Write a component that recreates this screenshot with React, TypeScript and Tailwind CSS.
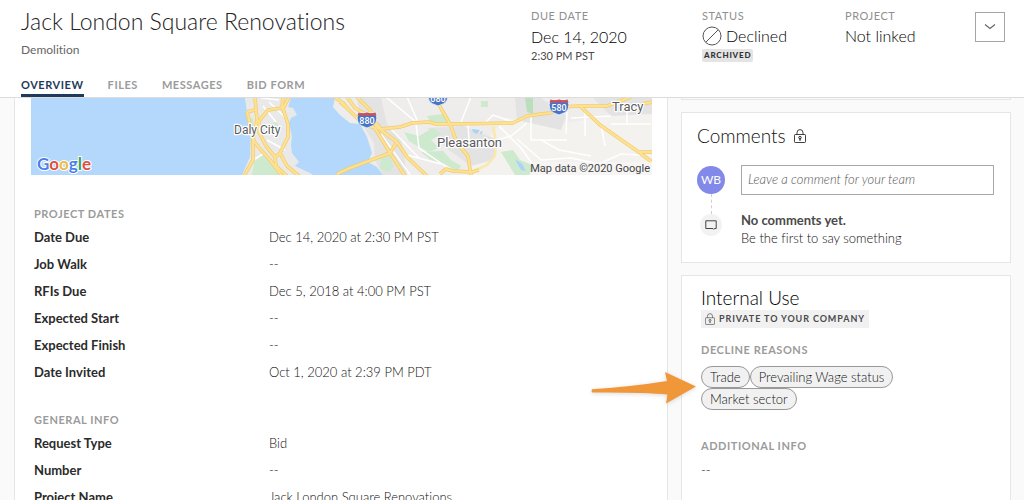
import type { ReactNode } from "react";

const tabs = ["OVERVIEW", "FILES", "MESSAGES", "BID FORM"];

const projectDates: [string, string][] = [
  ["Date Due", "Dec 14, 2020 at 2:30 PM PST"],
  ["Job Walk", "--"],
  ["RFIs Due", "Dec 5, 2018 at 4:00 PM PST"],
  ["Expected Start", "--"],
  ["Expected Finish", "--"],
  ["Date Invited", "Oct 1, 2020 at 2:39 PM PDT"],
];

const generalInfo: [string, string][] = [
  ["Request Type", "Bid"],
  ["Number", "--"],
  ["Project Name", "Jack London Square Renovations"],
];

const declineReasons = ["Trade", "Prevailing Wage status", "Market sector"];

function LockIcon({ className }: { className: string }) {
  return (
    <svg viewBox="0 0 12 14" fill="none" stroke="currentColor" strokeWidth="0.8" className={className} aria-hidden="true">
      <rect x="0.5" y="5.500" width="11" height="8" rx="0.8" />
      <path d="M3 5.500V3.600a3 3 0 0 1 6 0V5.500" />
      <circle cx="6" cy="8.600" r="1.200" strokeWidth="0.9" />
      <path d="M6 9.800v2" strokeWidth="1.200" />
    </svg>
  );
}

function Shield({ x, y, label }: { x: number; y: number; label: string }) {
  return (
    <g transform={`translate(${x} ${y})`}>
      <path
        d="M-8.5 -7.5Q-4.5 -6 0 -7.5Q4.500 -6 8.500 -7.5Q11 -2 9 2.500Q7 6 0 8Q-7 6 -9 2.500Q-11 -2 -8.5 -7.500Z"
        fill="#4775c4"
        stroke="#fff"
        strokeWidth="0.8"
      />
      <path d="M-8.500 -7.500Q-4.500 -6 0 -7.500Q4.500 -6 8.500 -7.500L9.400 -4.500H-9.400Z" fill="#d1515a" />
      <text y="4" textAnchor="middle" fill="#fff" fontSize="9" fontWeight="500">
        {label}
      </text>
    </g>
  );
}

const highways = [
  "M224 0L226 22L222 42L222 62L213 78",
  "M216 14L224 12M216 14L221 34L223 44",
  "M252 -1L251 10L237 12L228 23L228 34L235 48L244 59L250 55M244 59L245 68L256 78",
  "M258 -1L252 11L257 26L257 39L249 55L256 68L268 78",
  "M222 42L230 52L239 62L251 78",
  "M306 76L319 70L359 55L366 44",
  "M309 4L319 13L332 26L344 30L359 55L374 78",
  "M316 -1L324 10L336 17L347 30L366 44L376 59L396 78",
  "M302 -2L312 5L318 12",
  "M326 -1L340 13L344 24L350 31L369 29L381 25L398 24L405 26L419 26L482 25L496 18L510 16L519 15L530 9L549 8L576 8L592 2L600 -1",
  "M407 5L419 26L426 45L437 58L440 78",
  "M409 76L415 71L422 73L441 74L448 72",
  "M549 8L569 27L609 55L621 64M609 54H622",
  "M611 6L622 4",
];

const minorRoads = [
  "M355 -1L385 24M376 -1L387 24M440 -1L430 24M419 26L455 24L462 17L485 25",
  "M437 26L438 42L452 46L480 38L496 25M500 19V42M536 13L535 36M554 14V38M500 42H536",
  "M486 41L510 62L540 60L568 66L590 56L609 57M510 42L528 52L560 58",
  "M580 26H620M596 12V26M570 26L574 48M385 26L388 50L420 72M360 31L388 60",
  "M350 36L380 78M468 28L490 50L510 78M372 56L410 66M540 20L580 18",
  "M232 8L245 24M238 4L255 20M230 0L248 2M236 42L254 52M222 62L232 56",
];

function RegionMap() {
  return (
    <svg
      viewBox="0 0 621 77"
      preserveAspectRatio="xMidYMid slice"
      className="block h-[77px] w-full font-[Roboto,sans-serif]"
      role="img"
      aria-label="Project location"
    >
      <rect width="621" height="77" fill="#b3d8fb" />
      <path
        d="M214 0L216 15L220 29L219 59L211 77H282L279 75L264 68L268 64L261 55L260 47L261 39L258 25L260 20L266 17L262 10L257 9L260 0Z"
        fill="#e9e9ea"
      />
      <path
        d="M304 0L302 9L309 17L319 25L329 26L336 39L341 55L337 64L346 69L352 77H621V0Z"
        fill="#eeedeb"
      />
      <path d="M440 60L475 20L520 28L621 10V77H440Z" fill="#f3f2ef" />
      <g fill="#e3e3e4">
        <path d="M326 0H350L356 26L370 40L376 77H352L344 62L343 45L330 24Z" />
        <path d="M396 30L432 28L468 42L462 62L440 68L418 52Z" />
        <path d="M484 0H510L535 18L530 32L486 22Z" />
        <path d="M562 0H621V16L580 18Z" />
      </g>
      <g fill="#cde9ce">
        <path d="M223 64L232 57L244 68L249 77H221Z" />
        <path d="M217 21L222 20L223 29L219 30Z" />
        <path d="M239 26L245 24L248 29L241 31Z" />
        <path d="M373 34L388 38L402 30L410 36L400 42L408 50L398 54L388 49L378 43Z" />
        <path d="M390 54L412 53L420 62L430 68L426 73L414 66L400 62Z" />
        <path d="M350 60L358 58L363 68L358 74L349 71Z" />
        <path d="M396 18L412 16L417 24L400 24Z" />
        <path d="M470 54L482 52L489 62L503 68L498 77H484Z" />
        <path d="M450 3H457V9H450Z" />
      </g>
      <path d="M494 0H502V16L496 14Z" fill="#b9dfbd" />
      <g fill="#a9d3fa">
        <path d="M441 31L449 32L446 36L442 34ZM449 34L452 33L450 37Z" />
        <path d="M484 61L491 66L495 73L490 72Z" />
      </g>
      <g fill="none" stroke="#fff" strokeWidth="1.500">
        {minorRoads.map((d) => (
          <path key={d} d={d} />
        ))}
      </g>
      <path d="M441 74L456 67L464 58L465 44L462 28" fill="none" stroke="#fbe8ab" strokeWidth="2.500" />
      <g fill="none" strokeLinejoin="round">
        {highways.map((d) => (
          <path key={d} d={d} stroke="#f3cb69" strokeWidth="3.600" />
        ))}
        {highways.map((d) => (
          <path key={d} d={d} stroke="#fde293" strokeWidth="2.200" />
        ))}
      </g>
      <Shield x={336} y={22} label="880" />
      <Shield x={407} y={0} label="680" />
      <Shield x={528} y={9} label="580" />
      <g fill="#5c5c5f" stroke="#fff" strokeWidth="2.500" paintOrder="stroke" strokeLinejoin="round">
        <text x="203" y="36" fontSize="12">Daly City</text>
        <text x="406" y="49" fontSize="13">Pleasanton</text>
        <text x="581" y="13" fontSize="13">Tracy</text>
      </g>
      <rect x="500" y="64" width="121" height="13" fill="#f7f6f4" opacity="0.75" />
      <text x="619" y="74" textAnchor="end" fontSize="11" fill="#444">
        Map data ©2020 Google
      </text>
      <text
        x="6"
        y="72"
        fontSize="17"
        fontWeight="700"
        stroke="#fff"
        strokeWidth="2"
        paintOrder="stroke"
        className="font-[Lato,sans-serif]"
      >
        <tspan fill="#4a80ea">G</tspan>
        <tspan fill="#de4f43">o</tspan>
        <tspan fill="#eebc3f">o</tspan>
        <tspan fill="#4a80ea">g</tspan>
        <tspan fill="#3aa25c">l</tspan>
        <tspan fill="#de4f43">e</tspan>
      </text>
    </svg>
  );
}

function DetailSection({ title, rows }: { title: string; rows: [string, string][] }) {
  return (
    <section>
      <h2 className="text-[11px] leading-5 font-bold tracking-wider text-[#9b9b9b]">{title}</h2>
      <dl>
        {rows.map(([name, value]) => (
          <div key={name} className="grid grid-cols-[235px_1fr] text-[13px] leading-[27px]">
            <dt className="font-bold text-[#2b2b2b]">{name}</dt>
            <dd className="font-light text-[#111]">{value}</dd>
          </div>
        ))}
      </dl>
    </section>
  );
}

function HeaderField({ label, className, children }: { label: string; className: string; children: ReactNode }) {
  return (
    <div className={className}>
      <div className="text-[11px] leading-4 tracking-wider text-[#8f8f8f]">{label}</div>
      {children}
    </div>
  );
}

export default function App() {
  return (
    <div className="flex h-screen flex-col overflow-hidden bg-[#fafafa] font-[Lato,sans-serif] text-[#4a4a4a] [font-variant-ligatures:none]">
      <header className="flex shrink-0 border-b border-[#dcdcdc] bg-white pr-[19px] pl-[21px]">
        <div className="flex-1">
          <h1 className="pt-1.5 text-[23px] leading-[30px] font-light text-[#222]">Jack London Square Renovations</h1>
          <p className="pt-1 text-xs leading-5 text-[#666]">Demolition</p>
          <nav className="flex gap-6 pt-4">
            {tabs.map((tab, i) => (
              <a
                key={tab}
                href="#"
                aria-current={i === 0 ? "page" : undefined}
                className={
                  i === 0
                    ? "border-b-3 border-[#1f3a5a] text-[11px] leading-[18px] font-bold tracking-wider text-[#1f3a5a]"
                    : "border-b-3 border-transparent text-[11px] leading-[18px] font-bold tracking-wider text-[#9b9b9b]"
                }
              >
                {tab}
              </a>
            ))}
          </nav>
        </div>
        <div className="flex pt-2">
          <HeaderField label="DUE DATE" className="w-[171px]">
            <div className="pt-0.5 text-base leading-[22px] font-light text-black">Dec 14, 2020</div>
            <div className="text-[11px] leading-4">2:30 PM PST</div>
          </HeaderField>
          <HeaderField label="STATUS" className="w-[143px]">
            <div className="flex items-center gap-1 pt-px text-base leading-[22px] font-light text-black">
              <svg viewBox="0 0 20 20" fill="none" stroke="#555" className="size-5" aria-hidden="true">
                <circle cx="10" cy="10" r="9" />
                <path d="M3.800 16.200L16.200 3.800" />
              </svg>
              Declined
            </div>
            <div className="mt-0.5 w-fit rounded-xs bg-[#e4e4e4] px-0.5 text-[8px] leading-[13px] font-black tracking-widest text-[#333]">
              ARCHIVED
            </div>
          </HeaderField>
          <HeaderField label="PROJECT" className="w-[130px]">
            <div className="pt-px text-base leading-[22px] font-light text-black">Not linked</div>
          </HeaderField>
          <button
            type="button"
            aria-label="More actions"
            className="mt-1 flex size-[30px] items-center justify-center border border-[#a5a5a5] bg-white"
          >
            <svg viewBox="0 0 12 8" fill="none" stroke="#666" strokeWidth="1.200" className="h-2 w-3">
              <path d="M1 1.500L6 5.500L11 1.500" />
            </svg>
          </button>
        </div>
      </header>

      <main className="flex min-h-0 flex-1 gap-[13px] pr-[13px] pl-3.5">
        <div className="min-w-0 flex-1 overflow-hidden border-x border-[#e6e6e6] bg-white">
          <div className="pr-[15px] pl-4">
            <RegionMap />
          </div>
          <div className="flex flex-col gap-6 px-[19px] pt-[29px]">
            <DetailSection title="PROJECT DATES" rows={projectDates} />
            <DetailSection title="GENERAL INFO" rows={generalInfo} />
          </div>
        </div>

        <aside className="flex w-[330px] shrink-0 flex-col gap-3">
          <div className="h-0.5 shrink-0 border-x border-b border-[#e6e6e6]" />

          <section className="shrink-0 border border-[#e6e6e6] bg-white pt-[9px] pr-4 pb-[15px] pl-[15px]">
            <h2 className="flex items-center gap-2 text-[19px] leading-7 font-light text-[#111]">
              Comments
              <LockIcon className="h-3.5 w-3" />
            </h2>
            <div className="mt-[15px] grid grid-cols-[28px_1fr] gap-x-4">
              <div className="flex flex-col items-center pt-px">
                <div className="flex size-7 items-center justify-center rounded-full bg-[#8389e8] text-xs text-white">
                  WB
                </div>
                <div className="h-5 border-l border-dashed border-[#cfcfcf]" />
                <div className="flex size-[22px] items-center justify-center rounded-full bg-[#f2f2f2]">
                  <svg viewBox="0 0 12 10" fill="none" stroke="#444" className="h-2.5 w-3" aria-hidden="true">
                    <path d="M0.800 0.800H11.200V8.500H9.500L8.800 9.400L8 8.500H0.800Z" />
                  </svg>
                </div>
              </div>
              <div>
                <input
                  type="text"
                  aria-label="Comment"
                  placeholder="Leave a comment for your team"
                  className="block h-[30px] w-full border border-[#a8a8a8] px-1.5 pb-0.5 text-[13px] placeholder:font-light placeholder:text-[#555] placeholder:italic"
                />
                <p className="pt-4 text-[13px] leading-[18px] font-bold">No comments yet.</p>
                <p className="text-[13px] leading-[18px] font-light text-[#111]">Be the first to say something</p>
              </div>
            </div>
          </section>

          <section className="min-h-0 flex-1 border border-b-0 border-[#e6e6e6] bg-white px-[19px] pt-2.5">
            <h2 className="text-[19px] leading-6 font-light text-black">Internal Use</h2>
            <div className="flex h-[18px] w-fit items-center gap-1 bg-[#f1f1f1] px-1 text-[9px] font-bold tracking-widest">
              <LockIcon className="h-3 w-2.5" />
              PRIVATE TO YOUR COMPANY
            </div>
            <h3 className="pt-3 text-[11px] leading-5 font-bold tracking-wider text-[#9b9b9b]">DECLINE REASONS</h3>
            <div className="relative mt-1.5">
              <ul className="flex max-w-[220px] flex-wrap">
                {declineReasons.map((reason) => (
                  <li
                    key={reason}
                    className="rounded-full border border-[#999] bg-[#f1f1f1] px-2 text-[13px] leading-5 font-light text-[#111]"
                  >
                    {reason}
                  </li>
                ))}
              </ul>
              <svg
                viewBox="0 0 106 36"
                className="absolute top-1.5 right-full mr-1 h-9 w-[106px] drop-shadow-sm"
                aria-hidden="true"
              >
                <path d="M1 17.300Q42 14.500 76 9L74 0L105 14.500L75 31.500L76.500 22.500Q50 20 1 20.500Q0 19 1 17.300Z" fill="#f0973a" />
              </svg>
            </div>
            <h3 className="pt-[26px] text-[11px] leading-5 font-bold tracking-wider text-[#9b9b9b]">ADDITIONAL INFO</h3>
            <p className="pt-1 text-[13px] leading-5 font-light text-[#111]">--</p>
          </section>
        </aside>
      </main>
    </div>
  );
}
